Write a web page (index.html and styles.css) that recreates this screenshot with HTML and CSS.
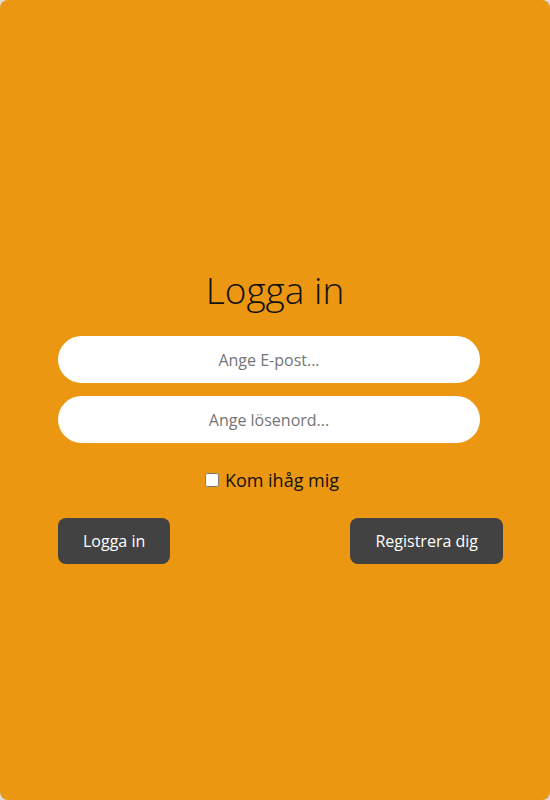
FILE: index.html
```html
<!DOCTYPE html>
<html lang="sv">
<head>
<meta charset="utf-8">
<title>Logga in</title>
<link rel="stylesheet" href="styles.css">
</head>
<body>
<div class="card">
  <form class="login">
    <h1 class="title">Logga in</h1>
    <input class="field" type="email" placeholder="Ange E-post...">
    <input class="field" type="password" placeholder="Ange lösenord...">
    <label class="remember"><input type="checkbox" class="check"> Kom ihåg mig</label>
    <div class="actions">
      <button type="button" class="btn">Logga in</button>
      <button type="button" class="btn">Registrera dig</button>
    </div>
  </form>
</div>
</body>
</html>
```
FILE: styles.css
```css
html, body {
  margin: 0;
  padding: 0;
  background: #dcdcdc;
}
body {
  font-family: "Open Sans", "Noto Sans", sans-serif;
}
.card {
  width: 550px;
  height: 800px;
  box-sizing: border-box;
  background: #ec9712;
  border-radius: 8px;
  padding: 264px 0 0 58px;
}
.login {
  width: 445px;
  display: flex;
  flex-direction: column;
}
.title {
  width: 434px;
  margin: 0 0 20px;
  text-align: center;
  font-weight: 300;
  font-size: 37px;
  line-height: 52px;
  color: #111;
}
.field {
  width: 422px;
  height: 47px;
  box-sizing: border-box;
  border: none;
  border-radius: 24px;
  background: #fff;
  text-align: center;
  font-family: inherit;
  font-size: 16px;
  margin: 0 0 13px;
  outline: none;
}
.field::placeholder {
  color: #757575;
}
.remember {
  width: 428px;
  display: flex;
  justify-content: center;
  align-items: center;
  gap: 6px;
  font-size: 18px;
  color: #111;
  margin: 12px 0 26px;
}
.check {
  width: 14px;
  height: 14px;
  margin: 0;
}
.actions {
  display: flex;
  justify-content: space-between;
}
.btn {
  height: 46px;
  padding: 0 25px;
  border: none;
  border-radius: 8px;
  background: #424242;
  color: #fff;
  font-family: inherit;
  font-size: 16px;
}
```
